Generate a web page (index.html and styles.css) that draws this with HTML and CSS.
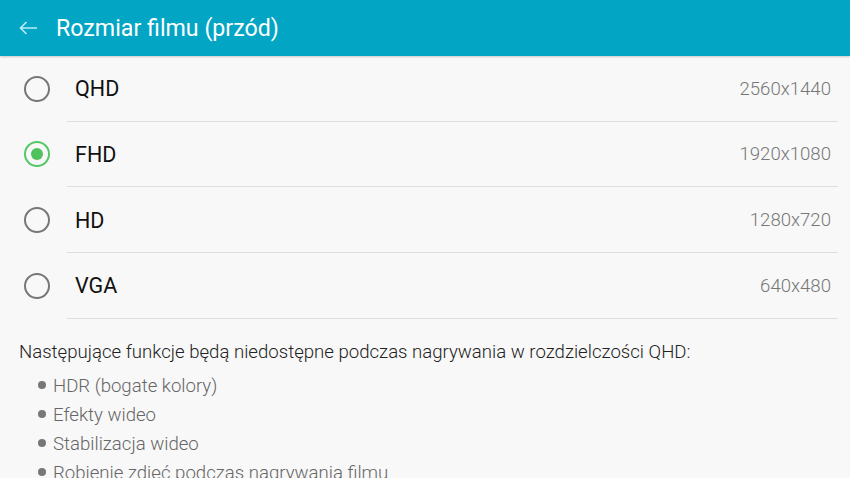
FILE: index.html
```html
<!DOCTYPE html>
<html lang="pl">
<head>
  <meta charset="UTF-8" />
  <meta name="viewport" content="width=device-width, initial-scale=1" />
  <title>Rozmiar filmu (przód)</title>
  <link rel="stylesheet" href="styles.css">
</head>
<body>
  <div class="app-bar">
    <svg class="back" width="20" height="20" viewBox="0 0 20 20">
      <path d="M19 10H2.5M8.5 4L2.5 10l6 6" fill="none" stroke="currentColor" stroke-width="1.6" />
    </svg>
    <h1>Rozmiar filmu (przód)</h1>
  </div>

  <ul class="options">
    <li class="option">
      <span class="radio"></span>
      <span class="label">QHD</span>
      <span class="value">2560x1440</span>
    </li>
    <li class="option">
      <span class="radio checked"></span>
      <span class="label">FHD</span>
      <span class="value">1920x1080</span>
    </li>
    <li class="option">
      <span class="radio"></span>
      <span class="label">HD</span>
      <span class="value">1280x720</span>
    </li>
    <li class="option">
      <span class="radio"></span>
      <span class="label">VGA</span>
      <span class="value">640x480</span>
    </li>
  </ul>

  <div class="note">
    <p>Następujące funkcje będą niedostępne podczas nagrywania w rozdzielczości QHD:</p>
    <ul class="features">
      <li>HDR (bogate kolory)</li>
      <li>Efekty wideo</li>
      <li>Stabilizacja wideo</li>
      <li>Robienie zdjęć podczas nagrywania filmu</li>
    </ul>
  </div>
</body>
</html>
```

FILE: styles.css
```css
body {
  margin: 0;
  font-family: Roboto, "Noto Sans", sans-serif;
  background: #f8f8f8;
  color: #222;
  overflow: hidden;
}
.app-bar {
  display: flex;
  align-items: center;
  height: 56px;
  background: #03a5c5;
  color: #fff;
  box-shadow: 0 1px 2px rgba(0, 0, 0, 0.2);
}
.back {
  margin-left: 18px;
  color: #b9ecf5;
}
.app-bar h1 {
  margin: 0 0 0 18px;
  font-size: 23.2px;
  font-weight: 400;
}
.options {
  list-style: none;
  margin: 0;
  padding: 0;
}
.option {
  display: flex;
  align-items: center;
  height: 65.67px;
  position: relative;
}
.option::after {
  content: "";
  position: absolute;
  left: 67px;
  right: 12px;
  bottom: 0;
  border-bottom: 1px solid #dedede;
}
.radio {
  box-sizing: border-box;
  width: 26px;
  height: 26px;
  margin-left: 24px;
  border: 2px solid #777;
  border-radius: 50%;
  display: flex;
  align-items: center;
  justify-content: center;
}
.radio.checked {
  border-color: #55c765;
}
.radio.checked::before {
  content: "";
  width: 12px;
  height: 12px;
  border-radius: 50%;
  background: #4fc25e;
}
.label {
  margin-left: 25px;
  font-size: 21.5px;
  color: #111;
  flex: 1;
}
.value {
  margin-right: 19px;
  font-size: 18.6px;
  font-weight: 300;
  color: #777;
}
.note {
  padding: 22px 19px 0;
}
.note p {
  margin: 0;
  font-size: 18.6px;
  font-weight: 300;
  color: #222;
}
.features {
  margin: 9px 0 0;
  padding: 0 0 0 19px;
  list-style: none;
}
.features li {
  font-size: 18.6px;
  font-weight: 300;
  line-height: 29px;
  color: #666;
}
.features li::before {
  content: "";
  display: inline-block;
  width: 8px;
  height: 8px;
  border-radius: 50%;
  background: #777;
  margin-right: 7px;
  vertical-align: 3px;
}
```
